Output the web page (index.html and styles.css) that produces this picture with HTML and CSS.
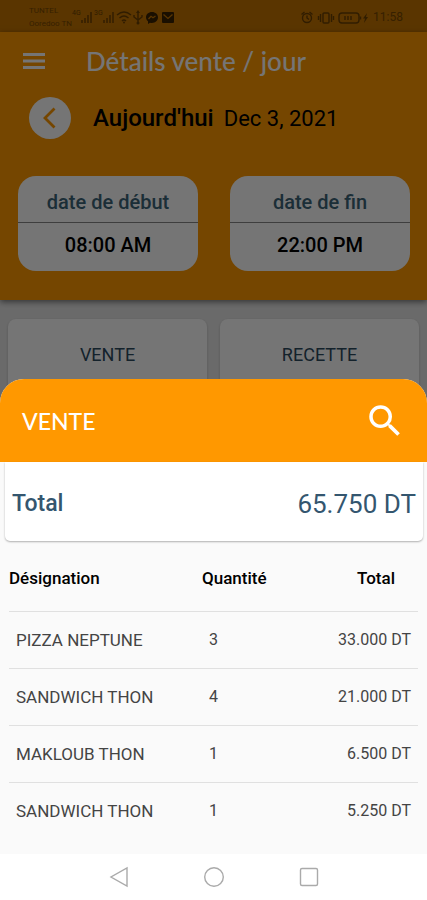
FILE: index.html
```html
<!DOCTYPE html>
<html lang="fr">
<head>
<meta charset="utf-8">
<meta name="viewport" content="width=device-width, initial-scale=1">
<title>Détails vente / jour</title>
<link rel="stylesheet" href="styles.css">
</head>
<body>
<div class="app">
  <div class="page">
    <div class="status">
      <div class="carriers"><span>TUNTEL</span><span>Ooredoo TN</span></div>
      <div class="status-icons">
        <svg width="22" height="16" viewBox="0 0 22 16"><text x="0" y="6" class="net">4G</text><path d="M10 14v-3M13 14V9M16 14V6M19 14V3" class="line"/></svg>
        <svg width="22" height="16" viewBox="0 0 22 16"><text x="0" y="6" class="net">3G</text><path d="M10 14v-3M13 14V9M16 14V6M19 14V3" class="line"/></svg>
        <svg width="16" height="16" viewBox="0 0 16 16"><path d="M1 6q7-6 14 0M3.500 9q4.500-4 9 0M6 12q2-2 4 0" class="line"/><circle cx="8" cy="13.500" r="1"/></svg>
        <svg width="12" height="16" viewBox="0 0 12 16"><path d="M6 3v11M2 6v2l4 3 4-3V6" class="line"/><path d="M6 1l2 3H4z"/><circle cx="6" cy="14" r="1.500"/></svg>
        <svg class="solid" width="16" height="16" viewBox="0 0 16 16"><path d="M8 3C4.500 3 2 5.300 2 8.300c0 1.700.8 3.100 2 4V15l2-1.300c4.500 1 8-1.700 8-5.400C14 5.300 11.500 3 8 3z"/><path d="M4.500 10L7 7.300l2 1.500L11.500 7" class="cut"/></svg>
        <svg class="solid" width="16" height="16" viewBox="0 0 16 16"><rect x="2" y="3" width="12" height="11" rx="1"/><path d="M3.500 5.500L8 9.500l4.500-4" class="cut"/></svg>
      </div>
      <div class="status-right">
        <svg width="14" height="16" viewBox="0 0 14 16"><circle cx="7" cy="9" r="4.500" class="line"/><path d="M7 6.500V9l2 1.500M1.500 5.500l3-2.500M12.500 5.500l-3-2.500" class="line"/></svg>
        <svg width="18" height="16" viewBox="0 0 18 16"><rect x="6" y="4" width="6" height="10" rx="1" class="line"/><path d="M3.500 5v8M14.500 5v8M1.500 7v4M16.500 7v4" class="line"/></svg>
        <svg width="32" height="16" viewBox="0 0 32 16"><rect x="1" y="4" width="20" height="10" rx="3" class="line"/><path d="M7 7v4M10 7v4M13 7v4M22.500 7.500v3" class="line"/><path d="M29 4l-4 5.500h2L26 14l4-6h-2z"/></svg>
        <span>11:58</span>
      </div>
    </div>
    <header class="top">
      <div class="bar">
        <button class="icon-btn" type="button" aria-label="Menu"><svg width="22" height="16" viewBox="0 0 22 16"><path d="M0 1.500h22M0 8h22M0 14.500h22" stroke="#fff" stroke-width="2.800"/></svg></button>
        <h1>Détails vente / jour</h1>
      </div>
      <div class="day">
        <button class="back" type="button" aria-label="Jour précédent"><svg width="42" height="42" viewBox="0 0 42 42"><path d="M25.500 11.500L16 21l9.500 9.500" fill="none" stroke="#ff9800" stroke-width="2.800"/></svg></button>
        <strong>Aujourd'hui</strong><span>Dec 3, 2021</span>
      </div>
      <div class="pair">
        <div class="range"><span class="range-name">date de début</span><span class="range-time">08:00 AM</span></div>
        <div class="range"><span class="range-name">date de fin</span><span class="range-time">22:00 PM</span></div>
      </div>
    </header>
    <div class="cards">
      <button class="card" type="button">VENTE</button>
      <button class="card" type="button">RECETTE</button>
    </div>
    <div class="scrim"></div>
  </div>
  <main class="sheet">
    <div class="sheet-head">
      <h2>VENTE</h2>
      <button class="icon-btn" type="button" aria-label="Rechercher"><svg width="42" height="42" viewBox="0 0 24 24"><path fill="#fff" d="M15.500 14h-.79l-.28-.27A6.471 6.471 0 0 0 16 9.500 6.500 6.500 0 1 0 9.500 16c1.610 0 3.090-.59 4.230-1.570l.27.28v.79l5 4.990L20.490 19l-4.990-5zm-6 0C7.010 14 5 11.990 5 9.500S7.010 5 9.500 5 14 7.010 14 9.500 11.990 14 9.500 14z"/></svg></button>
    </div>
    <div class="total"><span>Total</span><span class="amount">65.750 DT</span></div>
    <table>
      <thead><tr><th>Désignation</th><th>Quantité</th><th>Total</th></tr></thead>
      <tbody>
        <tr><td>PIZZA NEPTUNE</td><td>3</td><td>33.000 DT</td></tr>
        <tr><td>SANDWICH THON</td><td>4</td><td>21.000 DT</td></tr>
        <tr><td>MAKLOUB THON</td><td>1</td><td>6.500 DT</td></tr>
        <tr><td>SANDWICH THON</td><td>1</td><td>5.250 DT</td></tr>
      </tbody>
    </table>
  </main>
  <nav class="nav">
    <button class="icon-btn" type="button" aria-label="Retour"><svg width="22" height="22" viewBox="0 0 22 22"><path d="M19 2v18L3 11z"/></svg></button>
    <button class="icon-btn" type="button" aria-label="Accueil"><svg width="22" height="22" viewBox="0 0 22 22"><circle cx="11" cy="11" r="9.300"/></svg></button>
    <button class="icon-btn" type="button" aria-label="Applications"><svg width="22" height="22" viewBox="0 0 22 22"><rect x="2.500" y="2.500" width="17" height="17" rx="1.500"/></svg></button>
  </nav>
</div>
</body>
</html>
```
FILE: styles.css
```css
* { box-sizing: border-box; }
body { margin: 0; font-family: Roboto, "Liberation Sans", sans-serif; color: #000; background: #fafafa; }
button { font: inherit; border: 0; padding: 0; background: none; }
svg { display: block; }
h1, h2 { margin: 0; font-weight: 500; }

.app { min-height: 100vh; display: flex; flex-direction: column; }
.page { position: relative; background: #e8e8e8; }
.scrim { position: absolute; inset: 0; background: rgba(0, 0, 0, 0.54); }

.status { height: 32px; padding: 2px 24px 0 29px; display: flex; align-items: center; background: #c47400; color: #764600; }
.carriers { width: 43px; display: flex; flex-direction: column; font-size: 8px; line-height: 13px; white-space: nowrap; }
.status-icons, .status-right { display: flex; align-items: center; }
.status-right { margin-left: auto; gap: 3px; font-size: 12px; }
.status svg { fill: #6a3f00; }
.status svg.solid { fill: #3a2200; }
.status .line { fill: none; stroke: #6a3f00; stroke-width: 1.400; }
.status .cut { fill: none; stroke: #c47400; stroke-width: 1.300; }
.net { font-size: 7px; }

.top { background: #ff9800; padding-bottom: 29px; box-shadow: 0 2px 6px rgba(0, 0, 0, 0.5); }
.bar { height: 58px; padding: 0 23px; display: flex; align-items: center; gap: 41px; }
.bar h1 { font-family: Lato, sans-serif; font-size: 26px; color: #fff; }
.day { height: 56px; padding-left: 29px; display: flex; align-items: center; font-size: 22px; }
.back { width: 42px; height: 42px; border-radius: 50%; background: #fff; }
.day strong { font-size: 24px; font-weight: 500; margin: 0 10px 0 22px; }
.pair { display: grid; grid-template-columns: 1fr 1fr; gap: 32px; margin: 30px 17px 0 18px; }
.range { border-radius: 18px; background: #fff; text-align: center; font-size: 20px; font-weight: 500; }
.range span { display: block; }
.range-name { height: 47px; line-height: 52px; color: #3c6478; border-bottom: 1px solid #888; }
.range-time { height: 48px; line-height: 44px; }

.cards { display: grid; grid-template-columns: 1fr 1fr; gap: 13px; padding: 19px 8px 0; }
.card { height: 90px; padding-bottom: 20px; border-radius: 8px; background: #fff; color: #2d4b5f; font-size: 18px; box-shadow: 0 1px 3px rgba(0, 0, 0, 0.2); }

.sheet { position: relative; flex: 1; margin-top: -30px; background: #fafafa; border-radius: 24px 24px 0 0; }
.sheet-head { height: 83px; padding: 0 21px 0 22px; display: flex; align-items: center; justify-content: space-between; background: #ff9800; border-radius: 24px 24px 0 0; color: #fff; }
.sheet-head h2 { font-family: Lato, sans-serif; font-size: 23px; }
.total { height: 79px; margin: 0 4px 0 5px; padding: 4px 7px 0; display: flex; align-items: center; justify-content: space-between; background: #fff; border-radius: 0 0 5px 5px; box-shadow: 0 1px 2px rgba(0, 0, 0, 0.3); color: #34566f; font-size: 23px; font-weight: 500; }
.amount { font-size: 26px; font-weight: 400; }

table { width: calc(100% - 18px); margin: 0 9px; border-collapse: collapse; table-layout: fixed; }
th { height: 70px; padding: 5px 0 0; font-size: 17px; font-weight: 500; text-align: left; }
th:nth-child(2) { width: 95px; }
th:last-child { text-align: right; padding-right: 23px; }
th:first-child { width: 193px; }
tr { border-bottom: 1px solid #e0e0e0; }
tbody tr:last-child { border-bottom: 0; }
td { height: 57px; padding: 0 7px; font-size: 16px; color: #444; }
td:first-child { font-size: 17px; }
td:last-child { text-align: right; }

.nav { height: 46px; display: flex; align-items: center; justify-content: center; gap: 73px; background: #fff; }
.nav svg { fill: none; stroke: #aaa; stroke-width: 1.400; }
```
